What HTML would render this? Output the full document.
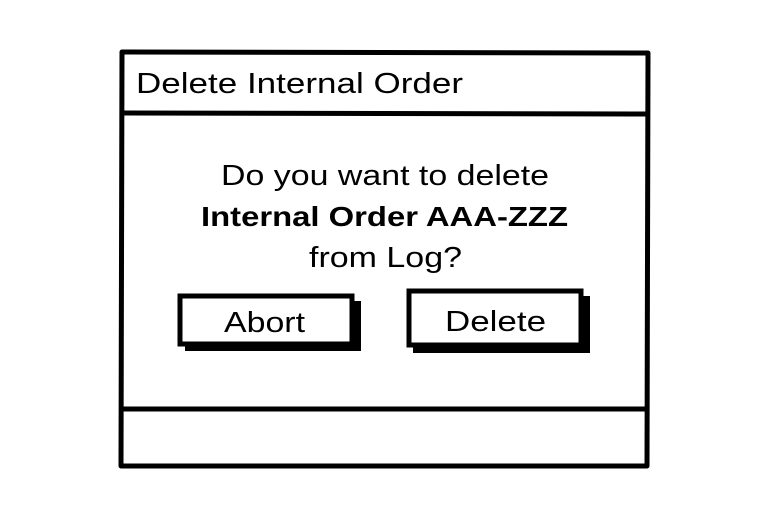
<!DOCTYPE html>
<html><head><style>
html,body{margin:0;padding:0;background:#fff;}
svg{display:block}
text{font-family:"Liberation Sans",sans-serif;fill:#000}
</style></head><body>
<svg width="772" height="532" viewBox="0 0 772 532">
<rect x="0" y="0" width="772" height="532" fill="#fff"/>
<path d="M122 52 L648 53 L647 466 L121 466 Z" fill="#fff" stroke="#000" stroke-width="5" stroke-linejoin="round"/>
<line x1="122" y1="113" x2="648" y2="114" stroke="#000" stroke-width="5"/>
<line x1="122" y1="409" x2="648" y2="409" stroke="#000" stroke-width="5"/>
<text x="136" y="93" font-size="29" textLength="327" lengthAdjust="spacingAndGlyphs">Delete Internal Order</text>
<text x="221" y="185" font-size="29" textLength="328" lengthAdjust="spacingAndGlyphs">Do you want to delete</text>
<text x="201" y="226" font-size="28" font-weight="bold" textLength="367" lengthAdjust="spacingAndGlyphs">Internal Order AAA-ZZZ</text>
<text x="309" y="267" font-size="29" textLength="153" lengthAdjust="spacingAndGlyphs">from Log?</text>
<rect x="185" y="301" width="176" height="50" fill="#000"/>
<rect x="180" y="296" width="172" height="48" fill="#fff" stroke="#000" stroke-width="5"/>
<text x="224" y="332" font-size="29" textLength="81" lengthAdjust="spacingAndGlyphs">Abort</text>
<rect x="413" y="296" width="177" height="57" fill="#000"/>
<rect x="409" y="291" width="172" height="54" fill="#fff" stroke="#000" stroke-width="5"/>
<text x="445" y="331" font-size="29" textLength="101" lengthAdjust="spacingAndGlyphs">Delete</text>
</svg>
</body></html>
